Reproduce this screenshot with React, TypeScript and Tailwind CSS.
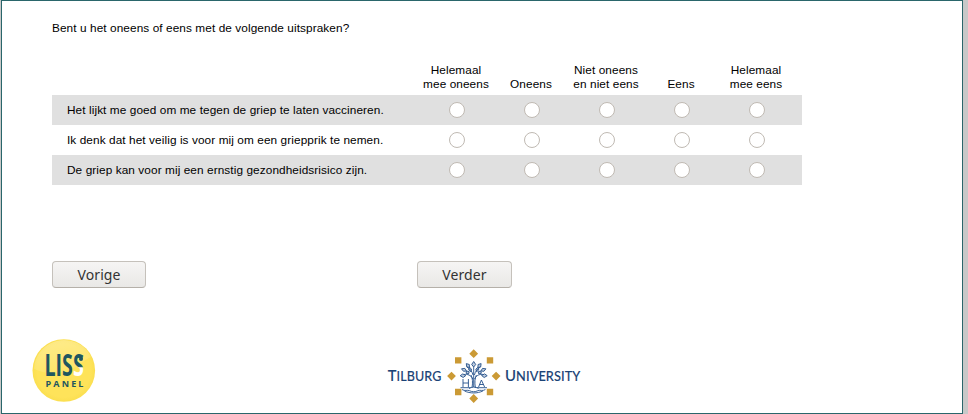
const columns: string[][] = [
  ["Helemaal", "mee oneens"],
  ["Oneens"],
  ["Niet oneens", "en niet eens"],
  ["Eens"],
  ["Helemaal", "mee eens"],
];

const statements = [
  "Het lijkt me goed om me tegen de griep te laten vaccineren.",
  "Ik denk dat het veilig is voor mij om een griepprik te nemen.",
  "De griep kan voor mij een ernstig gezondheidsrisico zijn.",
];

function NavButton({ label, width }: { label: string; width: string }) {
  return (
    <button
      className={`${width} h-[27px] rounded-[4px] border border-[#c5c1bb] border-b-[#b5b0a9] bg-linear-to-b from-[#f6f5f4] to-[#e9e8e6] pt-px text-center font-['Noto_Sans',sans-serif] text-[14px] leading-[24px] tracking-[0.1px] text-[#333]`}
    >
      {label}
    </button>
  );
}

function LissLogo() {
  return (
    <svg width="64" height="64" viewBox="0 0 64 64">
      <defs>
        <radialGradient id="ball" cx="0.5" cy="0.5" r="0.5">
          <stop offset="0.85" stopColor="#fee35a" />
          <stop offset="1" stopColor="#fbdf50" />
        </radialGradient>
        <linearGradient id="shine" x1="0.3" y1="0" x2="0.6" y2="1">
          <stop offset="0" stopColor="#fff" stopOpacity="0.3" />
          <stop offset="1" stopColor="#fff" stopOpacity="0.08" />
        </linearGradient>
        <linearGradient id="lastS" x1="0" y1="15" x2="0" y2="38" gradientUnits="userSpaceOnUse">
          <stop offset="0.54" stopColor="#1f5660" />
          <stop offset="0.6" stopColor="#fff" />
        </linearGradient>
      </defs>
      <circle cx="31.8" cy="31.5" r="31.3" fill="url(#ball)" />
      <path d="M2 30A30 30 0 0 1 59 18C50 22 49 26 37 31S14 35 2 30Z" fill="url(#shine)" />
      <g fontFamily="'Open Sans', sans-serif" fontWeight="700" fill="#1f5660">
        <text x="12.4" y="37" fontSize="30" fontWeight="700" textLength="28.6" lengthAdjust="spacingAndGlyphs">LIS</text>
        <text x="41.1" y="37" fontSize="30" fontWeight="700" textLength="11" lengthAdjust="spacingAndGlyphs" fill="url(#lastS)">S</text>
        <circle cx="49" cy="20" r="2" />
        <text x="13.5" y="48" fontSize="9" textLength="38" lengthAdjust="spacing">PANEL</text>
      </g>
    </svg>
  );
}

function TilburgLogo() {
  return (
    <svg width="200" height="60" viewBox="384 346 200 60">
      <g fill="#1b4376" stroke="#1b4376" strokeWidth="0.1" fontFamily="Lato, sans-serif" fontWeight="500">
        <text x="387.8" y="380.7" fontSize="15" textLength="53.6" lengthAdjust="spacingAndGlyphs">
          T<tspan fontSize="12.8">ILBURG</tspan>
        </text>
        <text x="505" y="380.7" fontSize="15" textLength="75.5" lengthAdjust="spacingAndGlyphs">
          U<tspan fontSize="12.8">NIVERSITY</tspan>
        </text>
      </g>
      <g fill="#cb9a35">
        <path d="M473.7 349.3l4.4 4.4-4.4 4.4-4.4-4.4zM451.5 371.7l4.4 4.4-4.4 4.4-4.4-4.4zM496.1 371.7l4.4 4.4-4.4 4.4-4.4-4.4zM473.7 394.1l4.4 4.4-4.4 4.4-4.4-4.4z" />
        <path d="M455 357.2h6.4v6.4H455zM486.8 357.2h6.4v6.4h-6.4zM455 388.8h6.4v6.4H455zM486.8 388.8h6.4v6.4h-6.4z" />
      </g>
      <g fill="none" stroke="#24508a" strokeWidth="0.9">
        <path d="M472 388c1-6 .5-10-1-13M475.4 388c-1-6-.5-10 1-13M473.7 387v-20M472.8 379c-2-4-5-5-9-4.5M474.6 379c2-4 5-5 9-4.5M473 375c-1-4-3-6-6-8M474.4 375c1-4 3-6 6-8" />
        <path fill="#24508a" fillOpacity="0.3" d="M473.7 367l-2-2.5 2-3 2 3zM469.5 367.5l-2.8-.6-.4-3.3 3 .9zM477.9 367.5l2.8-.6.4-3.3-3 .9zM466.5 371l-3 .3-2-2.5 3.4-.4zM480.9 371l3 .3 2-2.5-3.4-.4zM465.8 375.5l-2.6 2-3-1.8 2.6-1.8zM481.6 375.5l2.6 2 3-1.8-2.6-1.8zM470.8 371.7l-2.2-1.8 1-2.5 2 1.8zM476.6 371.7l2.2-1.8-1-2.5-2 1.8zM468.5 374l-2.5-.8.8-2.2 2.4.8zM478.9 374l2.5-.8-.8-2.2-2.4.8z" />
        <path d="M463 379v8M468.4 379v8M463 383h5.5M478.6 387l2.8-7 3.2 7M479.5 384.5h4M460.5 387.7h10M476.5 387.7h10.5M462 389.5c3 2 5 0 7.5 1.2 3 1.4 5.4 1.4 8.4 0 2.5-1.2 4.5 .8 7.5-1.2M464.5 391c5.6 2.6 12.8 2.6 18.4 0M469 388.6c2.5-2 7-2 9.5 0" />
      </g>
    </svg>
  );
}

export default function App() {
  return (
    <div className="h-[414px] w-[968px] bg-[#c8c8c8] pl-px font-['Liberation_Sans',Arial,sans-serif] text-[11.8px] tracking-[0.09px] text-black">
      <main className="flex h-full w-[962px] flex-col border border-[#2a666b] bg-white pl-[50px]">
        <p className="mt-[20px] h-[14px] leading-[14px]">Bent u het oneens of eens met de volgende uitspraken?</p>
        <table className="mt-[28px] w-[750px] table-fixed border-collapse">
          <colgroup>
            <col className="w-[367px]" />
            {columns.map((_, i) => (
              <col key={i} className="w-[75px]" />
            ))}
            <col className="w-[8px]" />
          </colgroup>
          <thead>
            <tr className="h-[32px]">
              <td />
              {columns.map((lines, i) => (
                <th key={i} className="p-0 pr-px pb-[4px] text-center align-bottom leading-[14px] font-normal whitespace-nowrap">
                  {lines.map((line) => (
                    <div key={line}>{line}</div>
                  ))}
                </th>
              ))}
              <td />
            </tr>
          </thead>
          <tbody>
            {statements.map((statement) => (
              <tr key={statement} className="h-[30px] odd:bg-[#e0e0e0]">
                <td className="p-0 pl-[15px] leading-[14px] whitespace-nowrap">{statement}</td>
                {columns.map((_, i) => (
                  <td key={i} className="p-0 pl-px">
                    <input
                      type="radio"
                      name={statement}
                      className="mx-auto block size-4 appearance-none rounded-full border border-[#c0bab3] bg-white"
                    />
                  </td>
                ))}
                <td />
              </tr>
            ))}
          </tbody>
        </table>
        <div className="mt-[76px] flex gap-[271px]">
          <NavButton label="Vorige" width="w-[94px]" />
          <NavButton label="Verder" width="w-[95px]" />
        </div>
        <footer className="mt-[51px] -ml-[20px] flex items-start gap-[288px]">
          <LissLogo />
          <div className="mt-[7px]">
            <TilburgLogo />
          </div>
        </footer>
      </main>
    </div>
  );
}
